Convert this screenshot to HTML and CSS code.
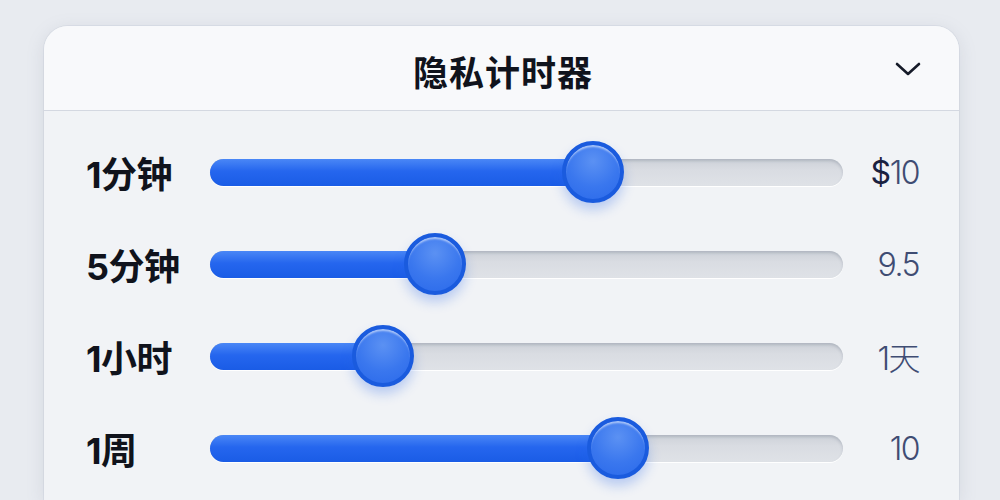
FILE: index.html
```html
<!DOCTYPE html>
<html lang="zh">
<head>
<meta charset="utf-8">
<title>隐私计时器</title>
<link rel="stylesheet" href="styles.css">
</head>
<body>
<div class="card">
  <div class="header">
    <span class="spacer"></span>
    <h1 class="title">隐私计时器</h1>
    <svg class="chevron" width="28" height="18" viewBox="0 0 28 18"><path d="M3 4 L14 14 L25 4" fill="none" stroke="#161b29" stroke-width="2.6" stroke-linecap="round" stroke-linejoin="round"/></svg>
  </div>
  <div class="rows">
    <div class="row">
      <span class="label">1分钟</span>
      <div class="track"><div class="fill" style="width:60.5%"><span class="thumb"></span></div></div>
      <span class="value"><span class="cur">$</span>10</span>
    </div>
    <div class="row">
      <span class="label">5分钟</span>
      <div class="track"><div class="fill" style="width:35.5%"><span class="thumb"></span></div></div>
      <span class="value">9.5</span>
    </div>
    <div class="row">
      <span class="label">1小时</span>
      <div class="track"><div class="fill" style="width:27.3%"><span class="thumb"></span></div></div>
      <span class="value">1天</span>
    </div>
    <div class="row">
      <span class="label">1周</span>
      <div class="track"><div class="fill" style="width:64.5%"><span class="thumb"></span></div></div>
      <span class="value">10</span>
    </div>
  </div>
</div>
</body>
</html>
```
FILE: styles.css
```css
html, body {
  margin: 0;
  padding: 0;
  height: 100%;
  overflow: hidden;
}
body {
  background: #e8ebf0;
  font-family: "Inter", "Noto Sans CJK SC", sans-serif;
}
.card {
  margin: 26px 41px 0 44px;
  height: 474px;
  background: #f1f3f6;
  border-radius: 24px 24px 0 0;
  box-shadow: 0 4px 18px rgba(120, 130, 150, 0.18), 0 0 0 1px rgba(210, 215, 225, 0.5);
  overflow: hidden;
}
.header {
  height: 84px;
  background: #f8f9fb;
  border-bottom: 1px solid #d4d8e1;
  display: grid;
  grid-template-columns: 1fr auto 1fr;
  align-items: center;
  padding: 0 37px 0 40px;
}
.title {
  margin: 0;
  font-family: "Noto Sans CJK SC", sans-serif;
  font-size: 35px;
  font-weight: 700;
  color: #10131c;
  letter-spacing: 1px;
  padding-top: 4px;
}
.chevron {
  justify-self: end;
  margin-top: 2px;
}
.rows {
  padding: 15px 40px 0 42px;
}
.row {
  height: 92px;
  display: grid;
  grid-template-columns: 124px 633px 76px;
  align-items: center;
}
.label {
  font-family: "Inter", "Noto Sans CJK SC", sans-serif;
  font-size: 36px;
  font-weight: 700;
  color: #10131c;
  letter-spacing: -0.5px;
}
.track {
  position: relative;
  height: 27px;
  border-radius: 14px;
  background: linear-gradient(#cdd1d8, #d9dce2 40%, #dfe2e7);
  box-shadow: inset 0 2px 3px rgba(100, 110, 130, 0.28), 0 1px 0 #ffffff;
}
.fill {
  position: relative;
  height: 100%;
  border-radius: 14px;
  background: linear-gradient(#4a87f6, #2566ee 45%, #1a5ce6);
}
.thumb {
  position: absolute;
  right: -31px;
  top: 50%;
  width: 54px;
  height: 54px;
  margin-top: -31px;
  border-radius: 50%;
  border: 4px solid #1a5bde;
  background: radial-gradient(circle at 50% 30%, #5b91f3 0%, #3a77ee 55%, #2a69ea 100%);
  box-shadow: inset 0 3px 2px -1px rgba(255, 255, 255, 0.55), 0 7px 12px rgba(40, 100, 230, 0.28);
}
.value {
  text-align: right;
  font-family: "Inter", "Noto Sans CJK SC", sans-serif;
  font-size: 32px;
  font-weight: 300;
  color: #3f4c73;
  letter-spacing: -1.5px;
}
.cur {
  color: #1a2140;
  font-weight: 400;
}
```
